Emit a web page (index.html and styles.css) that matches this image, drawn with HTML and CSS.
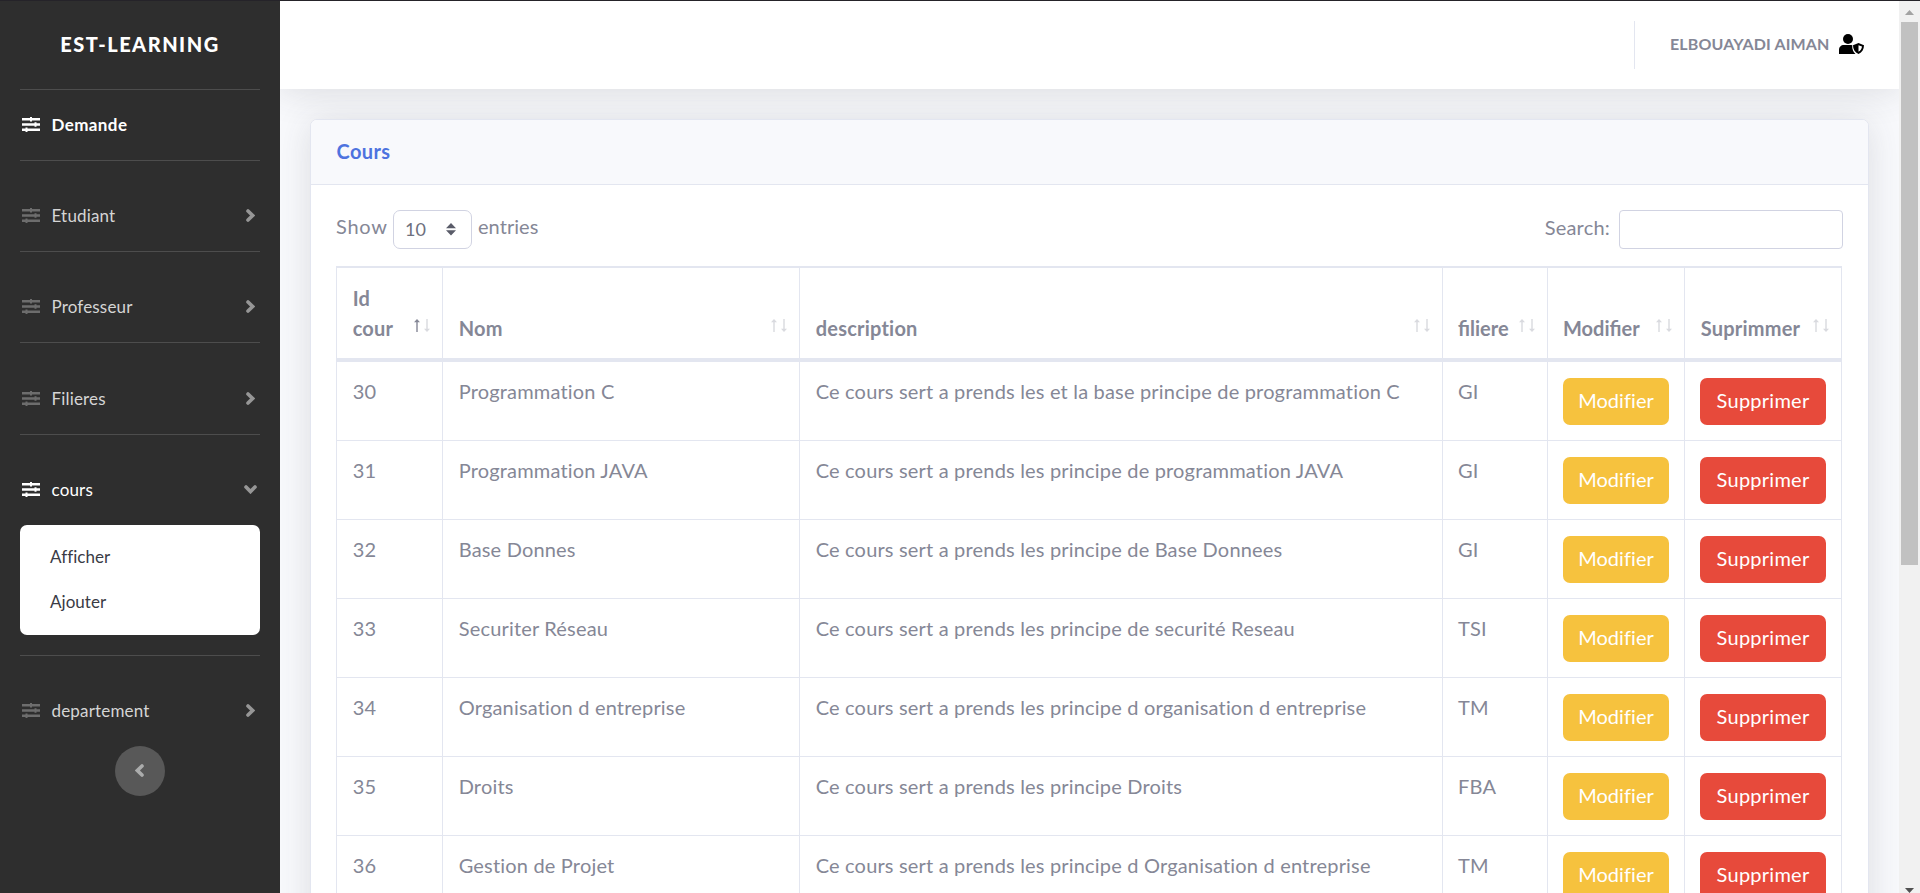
FILE: index.html
```html
<!DOCTYPE html>
<html lang="fr">
<head>
<meta charset="utf-8">
<title>EST-LEARNING</title>
<link rel="stylesheet" href="styles.css">
</head>
<body>
<svg class="defs" width="0" height="0">
  <symbol id="sliders" viewBox="0 0 18 15"><path d="M0 1h8V0h2v1H18v2.400H10v1H8v-1H0zM0 6.300h12.500v-1h2v1H18v2.400h-3.500v1h-2v-1H0zM0 11.600h3.500v-1h2v1H18V14H5.500v1H3.500v-1H0z"/></symbol>
  <symbol id="chev" viewBox="0 0 9 13"><path d="M2 2 6.600 6.500 2 11" fill="none" stroke="currentColor" stroke-width="3.600" stroke-linecap="round"/></symbol>
  <symbol id="up" viewBox="0 0 6 13"><path d="M2.300 13V3.200H0L3 0l3 3.200H3.700V13z"/></symbol>
  <symbol id="down" viewBox="0 0 6 13"><path d="M2.300 0v9.800H0L3 13l3-3.200H3.700V0z"/></symbol>
</svg>
<div class="edge"></div>
<div class="app">
  <nav class="sidebar">
    <div class="brand"><span>EST-LEARNING</span></div>
    <hr>
    <a class="item first active"><svg class="ico"><use href="#sliders"/></svg><b>Demande</b></a>
    <hr>
    <a class="item"><svg class="ico"><use href="#sliders"/></svg><span>Etudiant</span><svg class="chev"><use href="#chev"/></svg></a>
    <hr>
    <a class="item"><svg class="ico"><use href="#sliders"/></svg><span>Professeur</span><svg class="chev"><use href="#chev"/></svg></a>
    <hr>
    <a class="item tall"><svg class="ico"><use href="#sliders"/></svg><span>Filieres</span><svg class="chev"><use href="#chev"/></svg></a>
    <hr>
    <a class="item active"><svg class="ico"><use href="#sliders"/></svg><span>cours</span><svg class="chev turned"><use href="#chev"/></svg></a>
    <div class="submenu"><a>Afficher</a><a>Ajouter</a></div>
    <hr>
    <a class="item"><svg class="ico"><use href="#sliders"/></svg><span>departement</span><svg class="chev"><use href="#chev"/></svg></a>
    <button class="toggle"><svg class="chev"><use href="#chev"/></svg></button>
  </nav>
  <div class="main">
    <header class="topbar">
      <div class="sep"></div>
      <span class="user">ELBOUAYADI AIMAN</span>
      <svg class="avatar" viewBox="0 0 25 20"><circle cx="9" cy="5" r="5"/><path d="M0 20v-4c0-3 2-5 5-5h7l1.500.3c-.5 4 .5 6.700 3 8.700z"/><path d="M19.500 10l5 2c0 3.500-1.500 6-5 7.600-3.500-1.600-5-4.100-5-7.600z" fill="#fff" stroke="#fff" stroke-width="2"/><path fill-rule="evenodd" d="M19.500 9l5.500 2.200c0 4-1.800 7-5.500 8.800-3.700-1.800-5.500-4.800-5.500-8.800zM19.500 11.200v6.500c2.200-1.300 3.300-3 3.500-5.200z"/></svg>
    </header>
    <section class="card">
      <div class="card-head"><b>Cours</b></div>
      <div class="card-body">
        <div class="tools">
          <span class="show">Show</span>
          <div class="select"><span>10</span><svg width="10" height="13" viewBox="0 0 10 13"><path d="M0 5.200 5 0l5 5.200zM0 7.200 5 12.400l5-5.200z"/></svg></div>
          <span class="entries">entries</span>
          <label class="search" for="q">Search:</label><input id="q" type="text">
        </div>
        <table>
          <colgroup><col class="c1"><col class="c2"><col class="c3"><col class="c4"><col class="c5"><col class="c6"></colgroup>
          <thead><tr>
            <th>Id<br>cour<i class="sort asc"><svg><use href="#up"/></svg><svg><use href="#down"/></svg></i></th>
            <th>Nom<i class="sort"><svg><use href="#up"/></svg><svg><use href="#down"/></svg></i></th>
            <th>description<i class="sort"><svg><use href="#up"/></svg><svg><use href="#down"/></svg></i></th>
            <th class="snug">filiere<i class="sort"><svg><use href="#up"/></svg><svg><use href="#down"/></svg></i></th>
            <th class="snug">Modifier<i class="sort"><svg><use href="#up"/></svg><svg><use href="#down"/></svg></i></th>
            <th>Suprimmer<i class="sort"><svg><use href="#up"/></svg><svg><use href="#down"/></svg></i></th>
          </tr></thead>
          <tbody>
            <tr><td>30</td><td>Programmation C</td><td>Ce cours sert a prends les et la base principe de programmation C</td><td>GI</td><td><button class="btn edit">Modifier</button></td><td><button class="btn del">Supprimer</button></td></tr>
            <tr><td>31</td><td>Programmation JAVA</td><td>Ce cours sert a prends les principe de programmation JAVA</td><td>GI</td><td><button class="btn edit">Modifier</button></td><td><button class="btn del">Supprimer</button></td></tr>
            <tr><td>32</td><td>Base Donnes</td><td>Ce cours sert a prends les principe de Base Donnees</td><td>GI</td><td><button class="btn edit">Modifier</button></td><td><button class="btn del">Supprimer</button></td></tr>
            <tr><td>33</td><td>Securiter Réseau</td><td>Ce cours sert a prends les principe de securité Reseau</td><td>TSI</td><td><button class="btn edit">Modifier</button></td><td><button class="btn del">Supprimer</button></td></tr>
            <tr><td>34</td><td>Organisation d entreprise</td><td>Ce cours sert a prends les principe d organisation d entreprise</td><td>TM</td><td><button class="btn edit">Modifier</button></td><td><button class="btn del">Supprimer</button></td></tr>
            <tr><td>35</td><td>Droits</td><td>Ce cours sert a prends les principe Droits</td><td>FBA</td><td><button class="btn edit">Modifier</button></td><td><button class="btn del">Supprimer</button></td></tr>
            <tr><td>36</td><td>Gestion de Projet</td><td>Ce cours sert a prends les principe d Organisation d entreprise</td><td>TM</td><td><button class="btn edit">Modifier</button></td><td><button class="btn del">Supprimer</button></td></tr>
          </tbody>
        </table>
      </div>
    </section>
  </div>
  <div class="scrollbar">
    <svg class="arr" width="9" height="5" viewBox="0 0 9 5"><path d="M0 5 4.500 0 9 5z"/></svg>
    <div class="thumb"></div>
    <svg class="arr bottom" width="9" height="5" viewBox="0 0 9 5"><path d="M0 0h9L4.500 5z"/></svg>
  </div>
</div>
</body>
</html>
```
FILE: styles.css
```css
* { box-sizing: border-box; }
html, body { margin: 0; height: 893px; overflow: hidden; }
body { font: 20px/30px Lato, "Open Sans", sans-serif; letter-spacing: .18px; color: #858796; background: #f8f9fc; }
svg { fill: currentColor; display: block; flex: none; }
.defs { position: absolute; }
.edge { height: 1px; background: #252329; }
.app { display: flex; height: 892px; }

.sidebar { width: 280px; flex: none; padding: 0 20px; background: #2e2e2e; color: #d5d5d5; font-size: 17px; letter-spacing: .17px; }
.brand { height: 88px; padding-bottom: 2px; display: flex; align-items: center; justify-content: center; color: #fff; font-size: 20px; font-weight: 900; letter-spacing: 1.5px; }
hr { margin: 0; border: 0; height: 1px; background: #4d4d4d; }
.item { height: 90px; padding: 20px 5px 0 2px; display: flex; align-items: center; }
.item span, .item b { margin-left: 11.500px; }
.item b { letter-spacing: .4px; }
.item.first { height: 70px; padding-top: 0; }
.item.tall { height: 91px; }
.ico { width: 18px; height: 15px; margin-top: -1px; color: #6d6d6d; }
.active { color: #fff; }
.active .ico { color: #fff; }
.chev { width: 9px; height: 13px; color: #969696; margin: -1px 0 0 auto; }
.turned { transform: rotate(90deg); }
.submenu { height: 110px; margin-bottom: 20px; padding: 9px 0; border-radius: 7px; background: #fff; color: #3a3b45; letter-spacing: .05px; }
.submenu a { display: block; height: 45px; line-height: 45px; padding-left: 30px; }
.toggle { display: flex; align-items: center; justify-content: center; width: 50px; height: 50px; margin: 0 auto; padding: 0; border: 0; border-radius: 50%; background: #585858; }
.toggle .chev { margin: -1px 2px 0 0; transform: scaleX(-1); color: #abacac; }

.main { flex: 1; min-width: 0; overflow: hidden; }
.topbar { height: 88px; background: #fff; box-shadow: 0 3px 35px rgba(58,59,69,.15); display: flex; align-items: center; justify-content: flex-end; padding-right: 35px; }
.sep { width: 1px; height: 48px; background: #e3e6f0; margin-right: 35px; }
.user { font-size: 16px; font-weight: 700; width: 159px; padding-bottom: 2px; white-space: nowrap; letter-spacing: .13px; }
.avatar { width: 25px; height: 20px; margin: -2px 0 0 10px; color: #000; }

.card { margin: 30px 30px 0; height: 1000px; border: 1px solid #e3e6f0; border-radius: 7px; background: #fff; box-shadow: 0 3px 35px rgba(58,59,69,.15); }
.card-head { height: 65px; padding: 0 25.500px 2px; display: flex; align-items: center; color: #4e73df; background: #f8f9fc; border-bottom: 1px solid #e3e6f0; border-radius: 6px 6px 0 0; letter-spacing: .4px; }
.card-body { padding: 25px 26px 0 25px; }
.tools { display: flex; height: 39px; margin-bottom: 17px; }
.show, .entries { line-height: 33px; }
.entries { letter-spacing: .05px; }
.show { width: 57px; letter-spacing: .7px; }
.select { width: 79px; height: 39px; border: 1px solid #d1d3e2; border-radius: 7px; padding: 0 15px 0 11px; display: flex; align-items: center; justify-content: space-between; color: #6e707e; font-size: 18px; margin-right: 6px; }
.select span { padding-bottom: 2px; }
.select svg { color: #5a5c69; }
.search { margin-left: auto; line-height: 35px; letter-spacing: .2px; }
#q { width: 224px; height: 39px; margin: 0 -1px 0 9px; border: 1px solid #d1d3e2; border-radius: 4px; background: #fff; }

table { width: 1506px; table-layout: fixed; border-spacing: 0; border-collapse: separate; border-top: 2px solid #e3e6f0; border-right: 1px solid #e3e6f0; }
.c1 { width: 106px; } .c2 { width: 357px; } .c3 { width: 643px; } .c4 { width: 105px; } .c5 { width: 137px; } .c6 { width: 157px; }
th, td { text-align: left; padding: 14px 0 15px 15.700px; border-left: 1px solid #e3e6f0; white-space: nowrap; }
th { position: relative; height: 94px; vertical-align: bottom; border-bottom: 4px solid #e3e6f0; letter-spacing: .22px; }
.snug { letter-spacing: 0; padding-left: 15px; }
td { height: 79px; vertical-align: top; border-bottom: 1px solid #e3e6f0; }
td:nth-child(n+4) { padding-left: 15px; }
.sort { position: absolute; right: 12px; bottom: 26px; display: flex; gap: 4px; }
.sort svg { width: 6px; height: 13px; opacity: .3; }
.sort.asc svg:first-child { opacity: 1; }
.btn { display: block; height: 47px; border: 0; border-radius: 7px; color: #fff; font: inherit; padding: 0 0 4px; margin-top: 2px; text-align: center; }
.edit { width: 106px; background: #f6c23e; letter-spacing: .05px; }
.del { width: 126px; background: #e74a3b; letter-spacing: .25px; }

.scrollbar { width: 21px; flex: none; background: #f1f1f1; display: flex; flex-direction: column; align-items: center; padding-top: 9px; color: #a3a3a3; }
.thumb { width: 17px; height: 545px; margin-top: 7px; background: #c1c1c1; }
.bottom { margin-top: 323px; color: #505050; }
```
